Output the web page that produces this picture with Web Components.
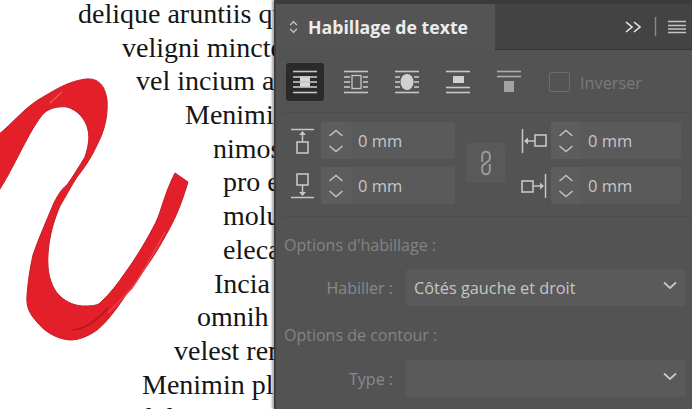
<!DOCTYPE html>
<html lang="fr"><head><meta charset="utf-8"><title>Habillage de texte</title>
<style>
html,body{margin:0;padding:0;width:692px;height:409px;overflow:hidden;background:#fff}
wrap-app{width:692px;height:409px}
</style></head><body>
<wrap-app>
  <doc-page>
    <doc-line style="--x:78px">delique aruntiis qu</doc-line>
    <doc-line style="--x:122px">veligni mincte</doc-line>
    <doc-line style="--x:136px">vel incium au</doc-line>
    <doc-line style="--x:185px">Menimi</doc-line>
    <doc-line style="--x:213px">nimos</doc-line>
    <doc-line style="--x:223px">pro e</doc-line>
    <doc-line style="--x:223px">molu</doc-line>
    <doc-line style="--x:223px">eleca</doc-line>
    <doc-line style="--x:214px">Incia</doc-line>
    <doc-line style="--x:197px">omnih</doc-line>
    <doc-line style="--x:174px">velest rem</doc-line>
    <doc-line style="--x:142px">Menimin pl</doc-line>
    <doc-line style="--x:88px">nim dolupit iminti</doc-line>
  </doc-page>
  <wrap-panel>
    <panel-tabs title-text="Habillage de texte"></panel-tabs>
    <mode-row></mode-row>
    <offset-grid></offset-grid>
    <section-label style="--top:18px">Options d'habillage :</section-label>
    <drop-field label="Habiller :" value="Côtés gauche et droit" style="--top:14px"></drop-field>
    <section-label style="--top:19px">Options de contour :</section-label>
    <drop-field label="Type :" value="" style="--top:15px"></drop-field>
  </wrap-panel>
</wrap-app>
<script>
const UI='"Open Sans","Noto Sans",sans-serif';
class WrapApp extends HTMLElement{constructor(){super();this.attachShadow({mode:'open'}).innerHTML=`<style>:host{display:flex;width:692px;height:409px;overflow:hidden}</style><slot></slot>`;}}
customElements.define('wrap-app',WrapApp);

class DocPage extends HTMLElement{constructor(){super();this.attachShadow({mode:'open'}).innerHTML=`
<style>:host{display:block;flex:0 0 274px;width:274px;height:409px;position:relative;overflow:hidden;background:#fff;
 font:28px/33.7px "Liberation Serif",serif;color:#151515;white-space:nowrap}
.text{display:flex;flex-direction:column;margin-top:-3px}
svg{position:absolute;left:0;top:0;filter:blur(.5px)}
</style>
<div class="text"><slot></slot></div>
<svg width="200" height="350" viewBox="0 0 200 350">
<path fill="#e3202a" stroke="#c01c25" stroke-width="1" d="M-2 135C12 124 26 106 43 97C58 88 70 81 86 79C98 78 105 85 107 100C108 115 105 130 97 145C90 160 84 168 77 177C71 186 66 196 60 206C53 222 49 238 48 254C47 272 50 283 57 293C64 301 72 305 82 306C90 306 96 306 100 303C110 294 118 283 125 273C136 258 148 238 156 222C161 212 165 192 175 173L188 182C183 198 178 214 167 233C157 252 146 268 133 285C122 300 110 320 97 330C87 337 78 340 70 340C56 339 44 331 37 322C30 314 26 308 27 295C28 282 30 268 33 255C38 240 46 222 53 205C56 198 62 188 67 185C74 175 80 165 85 157C88 148 90 138 88 130C86 120 78 110 67 107C58 106 50 108 44 113C30 128 14 168 -2 192Z"/>
<path fill="none" stroke="#f2555c" stroke-width="1.3" d="M50 103L62 92"/>
<path fill="none" stroke="#f04048" stroke-width="1.5" d="M108 313L132 288C145 270 155 250 165 232"/>
<path fill="none" stroke="#a8161e" stroke-width="1.2" d="M72 330C85 329 95 322 108 308"/>
</svg>`;}}
customElements.define('doc-page',DocPage);

class DocLine extends HTMLElement{constructor(){super();this.attachShadow({mode:'open'}).innerHTML=`
<style>:host{display:block;height:33.7px;padding-left:var(--x);flex:none}</style><slot></slot>`;}}
customElements.define('doc-line',DocLine);

class WrapPanel extends HTMLElement{constructor(){super();this.attachShadow({mode:'open'}).innerHTML=`
<style>:host{display:flex;flex-direction:column;flex:1;height:409px;box-sizing:border-box;background:#535353;
 border-left:2px solid #404040;box-shadow:-2px 0 2px rgba(0,0,0,.35);position:relative;font-family:${UI}}</style>
<slot></slot>`;}}
customElements.define('wrap-panel',WrapPanel);

class PanelTabs extends HTMLElement{constructor(){super();const t=this.getAttribute('title-text');this.attachShadow({mode:'open'}).innerHTML=`
<style>:host{display:flex;height:50px;box-sizing:border-box;padding-top:4px;background:#3b3b3b;flex:none}
.tab{width:219px;background:#545454;display:flex;align-items:center;gap:10px;padding-left:13px;box-sizing:border-box;padding-bottom:1px}
.t{font-weight:700;font-size:17.7px;color:#ececec;white-space:nowrap}
.rest{flex:1;background:#434343;border-bottom:1px solid #343434;display:flex;align-items:center;justify-content:flex-end;padding:0 5px 0 0}
svg{display:block}
</style>
<div class="tab"><svg width="9" height="14" viewBox="0 0 9 14" fill="none" stroke="#cfcfcf" stroke-width="1.2"><path d="M1.2 5 4.5 1.5 7.800 5M1.2 9l3.3 3.5L7.800 9"/></svg><span class="t">${t}</span></div>
<div class="rest">
<svg width="62" height="22" viewBox="0 0 62 22" fill="none"><path d="M1 6l6 5-6 5M9 6l6 5-6 5" stroke="#e8e8e8" stroke-width="1.6"/><path d="M30.500 1v19" stroke="#8a8a8a" stroke-width="1.4"/><path d="M43 5.500h18M43 9.500h18M43 13h18M43 16.500h18" stroke="#c4c4c4" stroke-width="1.5"/></svg>
</div>`;}}
customElements.define('panel-tabs',PanelTabs);

const L='#c6c6c6';
const line=(x1,x2,y,c=L,w=1.6)=>`<path d="M${x1} ${y}H${x2}" stroke="${c}" stroke-width="${w}"/>`;
const MODES=[
 line(1,25,1.5)+line(1,25,22.500)+`<rect x="8" y="6" width="10" height="11" fill="#d8d8d8"/>`+line(1,25,7)+line(1,25,12)+line(1,25,17),
 line(1,25,1.500)+line(1,25,22.500)+`<rect x="9" y="5.500" width="9" height="13" fill="none" stroke="${L}" stroke-width="1.3"/>`+[7,12,17].map(y=>line(1,7,y)+line(20,25,y)).join(''),
 line(1,25,1.500)+line(1,25,22.500)+`<ellipse cx="13" cy="12" rx="6.500" ry="8" fill="#d0d0d0"/>`+[7,12,17].map(y=>line(1,6,y)+line(20,25,y)).join(''),
 line(1,25,1.500)+`<rect x="8" y="6" width="11" height="7" fill="#cfcfcf"/>`+line(1,25,17.500)+line(1,25,22.500),
 line(1,25,1.500,'#adadad')+line(1,25,6.500,'#adadad')+`<rect x="8" y="11" width="10" height="11" fill="#a2a2a2"/>`
];
class ModeRow extends HTMLElement{constructor(){super();this.attachShadow({mode:'open'}).innerHTML=`
<style>:host{display:flex;align-items:center;height:38px;margin:13px 0 0 10px;flex:none}
.b{width:38px;height:38px;margin-right:13px;display:flex;align-items:center;justify-content:center;border-radius:3px;flex:none}
.b.on{background:#2a2a2a}
.b.last{margin-right:0}
.c{width:21px;height:20px;box-sizing:border-box;border:1px solid #6c6c6c;border-radius:2px;margin-left:21px}
.l{margin-left:10px;font-size:16.3px;color:#7a7a7a;padding-top:2px}
</style>
${MODES.map((m,i)=>`<div class="b ${i==0?'on':''} ${i==4?'last':''}"><svg width="26" height="24" viewBox="0 0 26 24" fill="none">${m}</svg></div>`).join('')}
<span class="c"></span><span class="l">Inverser</span>`;}}
customElements.define('mode-row',ModeRow);

const ICO={
 top:`<path d="M0 1.500H23" stroke-width="1.500"/><path d="M11.500 14V4" stroke-width="1.500"/><path d="M8 7l3.500-4L15 7z" fill="${L}" stroke="none"/><rect x="6" y="14" width="11" height="11" stroke-width="1.600"/>`,
 bot:`<path d="M0 24.500H23" stroke-width="1.500"/><path d="M11.500 12V22" stroke-width="1.500"/><path d="M8 19l3.500 4L15 19z" fill="${L}" stroke="none"/><rect x="6" y="1" width="11" height="11" stroke-width="1.600"/>`,
 left:`<path d="M1.500 1V25" stroke-width="1.500"/><path d="M14 13H4" stroke-width="1.500"/><path d="M7 9.500L3 13l4 3.500z" fill="${L}" stroke="none"/><rect x="14" y="7" width="11" height="11" stroke-width="1.600"/>`,
 right:`<path d="M24.500 1V25" stroke-width="1.500"/><path d="M12 13H22" stroke-width="1.500"/><path d="M19 9.500l4 3.500-4 3.500z" fill="${L}" stroke="none"/><rect x="1" y="8" width="11" height="11" stroke-width="1.600"/>`
};
class NumField extends HTMLElement{constructor(){super();this.attachShadow({mode:'open'}).innerHTML=`
<style>:host{display:flex;align-items:center;height:37px;flex:none}
.i{width:30px;flex:none;display:block}
.f{flex:1;height:37px;background:#5a5a5a;border-radius:3px;display:flex;align-items:center;overflow:hidden}
.s{width:30px;height:37px;background:#5d5d5d;display:flex;align-items:center;justify-content:center;flex:none}
.v{margin-left:7px;font-size:16.5px;color:#c6c6c6}
</style>
<svg class="i" width="30" height="26" viewBox="0 0 30 26" fill="none" stroke="${L}">${ICO[this.getAttribute('icon')]}</svg>
<div class="f"><div class="s"><svg width="16" height="24" viewBox="0 0 16 24" fill="none" stroke="#c4c4c4" stroke-width="1.400"><path d="M1.500 7 8 1.500 14.500 7M1.500 17 8 22.500 14.500 17"/></svg></div><span class="v">0 mm</span></div>`;}}
customElements.define('num-field',NumField);

class OffsetGrid extends HTMLElement{constructor(){super();this.attachShadow({mode:'open'}).innerHTML=`
<style>:host{display:grid;grid-template-columns:164px 39px 165px;column-gap:11px;row-gap:8px;margin:11px 0 0 7px;padding:9px 0 12px 8px;
 border-top:1px solid #4c4c4c;border-bottom:1px solid #4c4c4c;position:relative;flex:none;width:401px;justify-content:start}
.chain{grid-column:2;grid-row:1/3;align-self:center;width:39px;height:40px;background:#595959;display:flex;align-items:center;justify-content:center;border-radius:2px}
.c3{grid-column:3;margin-left:5px}.c1{grid-column:1}
</style>
<num-field class="c1" icon="top" style="grid-row:1"></num-field>
<div class="chain"><svg width="12" height="26" viewBox="0 0 12 26" fill="none" stroke="#9a9a9a" stroke-width="2"><path d="M2.200 12V5.500a3.800 3.800 0 0 1 7.600 0V9C9.800 11.500 2.200 14 2.200 17v3.500a3.800 3.800 0 0 0 7.600 0V14"/></svg></div>
<num-field class="c3" icon="left" style="grid-row:1"></num-field>
<num-field class="c1" icon="bot" style="grid-row:2"></num-field>
<num-field class="c3" icon="right" style="grid-row:2"></num-field>`;}}
customElements.define('offset-grid',OffsetGrid);

class SectionLabel extends HTMLElement{constructor(){super();this.attachShadow({mode:'open'}).innerHTML=`
<style>:host{display:block;margin:var(--top) 0 0 8px;font-size:16px;line-height:20px;color:#838383;flex:none;white-space:nowrap}</style><slot></slot>`;}}
customElements.define('section-label',SectionLabel);

class DropField extends HTMLElement{constructor(){super();this.attachShadow({mode:'open'}).innerHTML=`
<style>:host{display:flex;align-items:center;margin-top:var(--top);flex:none;height:37px}
.l{width:117px;text-align:right;font-size:16px;color:#8a8a8a;flex:none;white-space:nowrap}
.d{margin-left:13px;width:280px;height:37px;box-sizing:border-box;background:#5a5a5a;border-radius:3px;display:flex;align-items:center;justify-content:space-between;padding:0 9px 0 8px}
.v{font-size:16.300px;color:#c6c6c6;white-space:nowrap}
</style>
<span class="l">${this.getAttribute('label')}</span>
<div class="d"><span class="v">${this.getAttribute('value')}</span><svg width="14" height="9" viewBox="0 0 14 9" fill="none" stroke="#c8c8c8" stroke-width="1.700" style="margin-top:-4px;margin-left:auto"><path d="M1 1.500 7 7l6-5.500"/></svg></div>`;}}
customElements.define('drop-field',DropField);
</script>
</body></html>
